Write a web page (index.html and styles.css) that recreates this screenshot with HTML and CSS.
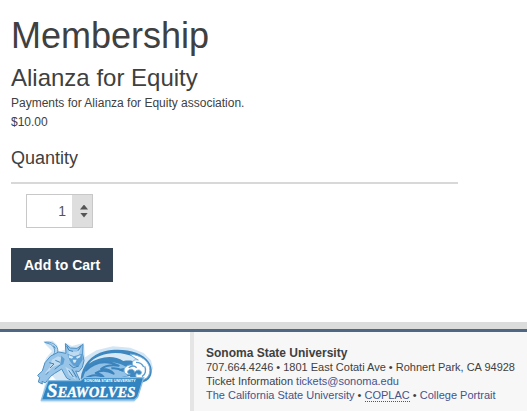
FILE: index.html
```
<!DOCTYPE html>
<html lang="en">
  <head>
    <meta charset="UTF-8" />
    <meta name="viewport" content="width=device-width, initial-scale=1.0" />
    <title>Membership - Sonoma State University</title>
    <link rel="stylesheet" href="styles.css">
  </head>
  <body>
    <main class="content">
      <h1>Membership</h1>
      <h2>Alianza for Equity</h2>
      <p>Payments for Alianza for Equity association.</p>
      <p>$10.00</p>
      <form class="cart-form">
        <h3><label for="quantity">Quantity</label></h3>
        <div class="quantity-row">
          <div class="spinner">
            <input type="text" inputmode="numeric" id="quantity" name="quantity" value="1" />
            <div class="spinner-buttons">
              <button type="button" class="up" aria-label="Increase quantity"></button>
              <button type="button" class="down" aria-label="Decrease quantity"></button>
            </div>
          </div>
        </div>
        <button type="submit" class="add-to-cart">Add to Cart</button>
      </form>
    </main>

    <footer class="footer">
      <div class="footer-logo">
        <svg class="logo" viewBox="0 0 390 210" role="img" aria-label="Seawolves">
          <!-- pale outline -->
          <path d="M40 18l28-1 14 14 4 18 18-4 2-22 20 10 36-10 3 44 34-21 50-12 52 4 40 16 22 22 6 24-12 24-18 12-16 54-12 12H32l12-54 40-6-20-22-20 14-18-6 12-26 10-32 18-22-18-18z" fill="#d3e6f5" />
          <!-- wave -->
          <path d="M152 132c4-42 32-73 72-83 52-12 111 1 132 31 14 20 12 46-6 57-20 12-48 4-50-14l-70 12z" fill="#3f87bf" />
          <path d="M176 86c30-34 94-42 138-18 16 8 26 17 32 29-20-18-42-23-66-19-26-18-68-17-104 8z" fill="#d9eaf7" />
          <path d="M160 126c6-26 30-44 62-45 28-1 54 4 73 19-16-2-24 0-28 6 12 2 20 7 26 17l-40 7z" fill="#91c1e7" />
          <path d="M166 108c26-27 62-34 100-16-26-3-42 1-53 10 16-1 30 4 38 14-20-11-38-12-54-2 10 1 19 5 24 12-22-9-44-5-60 8M244 100c14-2 25 1 35 8" fill="none" stroke="#3b83bd" stroke-width="6" stroke-linejoin="round" />
          <path d="M300 57c34 4 54 20 59 41 4 23-10 38-28 36-11-1-17-11-11-19 8 8 19 1 12-7-5-5-13-3-18 4-2-9-10-12-18-7-6 5-3 12 5 12-13 5-23-6-17-17 5-8 14-12 24-9-4-12 4-19 17-16-9-5-17-9-25-18z" fill="#fff" stroke="#76b1dc" stroke-width="3" />
          <path d="M318 82c10 0 19 5 23 14M344 94c6 12 2 25-8 31M296 98c8-6 18-6 24 0" fill="none" stroke="#5b9dcf" stroke-width="4" />
          <!-- wolf -->
          <path d="M62 66c16-8 16-28 0-38L44 22c20-3 36 6 39 21 2 12-2 18-8 24" fill="#b5d6ee" stroke="#5e9bcb" stroke-width="3" />
          <path d="M62 63l24-12 22 4-2-29 15 13 20 1 18-12-1 29 4 20-5 20-10 13-10-2 14 31-9 7-32-17-15-27-21 13-12 9-16 20-10-5 1 8-12-6 4-13-6-7 14-13 8-25z" fill="#98c4e8" stroke="#4c8fc3" stroke-width="3" stroke-linejoin="round" />
          <path d="M66 74l18-10 14 6-8 18-24 9-15 20-6-2 14-18zM116 43l10 7 14 0 12-8-6 18 6 15-6 15-10 5-8-16-12-4zM106 95l16 9 17 31-22-15z" fill="#bedbf1" />
          <path d="M112 56l20 8 24-8 2 18-12 20-16-2-12-16zM94 62l10 10-4 16-10 4z" fill="#5d9fd2" />
          <path d="M116 60l14 6-4 5-9-3zM152 60l-14 6 3 5 9-4zM128 74h12l-4 9h-5z" fill="#d9eaf7" />
          <!-- fur and face -->
          <path d="M110 33l7 13 12 3M153 33l-9 14M118 88l12 10 16-5M58 83l14 4-12 12M76 76l14 6M48 119l8-9M74 103l16-13M116 106l14 20M126 103l14 24M70 32l6 8" fill="none" stroke="#3d82b8" stroke-width="3" />
          <!-- banner -->
          <path d="M54 137h97l10-9h180l-18 58-10 9H34z" fill="#3184bf" stroke="#8dbfe3" stroke-width="4" />
          <text class="logo-university" x="162" y="141">SONOMA STATE UNIVERSITY</text>
          <text class="logo-name" x="50" y="186"><tspan class="logo-initial">S</tspan>EAWOLVES</text>
        </svg>
      </div>
      <div class="footer-info">
        <strong>Sonoma State University</strong>
        <p>707.664.4246 • 1801 East Cotati Ave • Rohnert Park, CA 94928</p>
        <p>Ticket Information <a href="mailto:tickets@sonoma.edu">tickets@sonoma.edu</a></p>
        <p>
          <a href="#">The California State University</a> •
          <a href="#"><abbr>COPLAC</abbr></a> •
          <a href="#">College Portrait</a>
        </p>
      </div>
    </footer>
  </body>
</html>
```

FILE: styles.css
```
* {
  box-sizing: border-box;
}
body {
  display: flex;
  flex-direction: column;
  min-height: 100vh;
  margin: 0;
  background: #fff;
  font-family: "Liberation Sans", Arial, sans-serif;
  font-size: 12px;
  color: #404040;
}
h1,
h2,
h3,
p {
  margin: 0;
  font-weight: normal;
}
.content {
  padding: 16px 11px 47px;
}
h1 {
  font-size: 36px;
  line-height: 40px;
  margin-bottom: 8px;
}
h2 {
  font-size: 24px;
  line-height: 28px;
  margin-bottom: 2px;
}
h3 {
  font-size: 18px;
  line-height: 20px;
}
.content p {
  line-height: 19px;
}
.cart-form {
  max-width: 447px;
  margin-top: 16px;
}
.quantity-row {
  margin-top: 14px;
  padding: 10px 15px 20px;
  border-top: 2px solid #d8d8d8;
}
.spinner {
  display: flex;
  width: 67px;
  height: 34px;
  border: 1px solid #c8c8c8;
}
.spinner input {
  flex: 1;
  min-width: 0;
  padding: 0 6px;
  border: 0;
  background: #fff;
  color: #555;
  font: 14px "Liberation Sans", Arial, sans-serif;
  text-align: right;
}
.spinner-buttons {
  display: flex;
  flex-direction: column;
  justify-content: center;
  gap: 3px;
  width: 20px;
  padding-left: 4px;
  background: #dedede;
}
.spinner-buttons button {
  width: 8px;
  height: 5px;
  margin: 0 auto;
  padding: 0;
  border: 0;
  background: #555;
  cursor: pointer;
}
.up {
  clip-path: polygon(50% 0, 100% 100%, 0 100%);
}
.down {
  clip-path: polygon(0 0, 100% 0, 50% 100%);
}
.add-to-cart {
  display: block;
  height: 34px;
  padding: 0 13px;
  border: 0;
  background: #344454;
  color: #fff;
  font: bold 14px "Liberation Sans", Arial, sans-serif;
  cursor: pointer;
}
.footer {
  display: flex;
  flex: 1;
  border-top: 3px solid #4e6785;
  box-shadow: 0 -7px #dcdcdc;
  font-size: 11px;
  line-height: 14px;
}
.footer-logo {
  flex: 0 0 193px;
  padding: 3px 30px 0;
  border-right: 4px solid #e5e5e5;
}
.logo {
  display: block;
  width: 130px;
  height: 70px;
}
.logo-university {
  fill: #fff;
  font: bold 11px "Liberation Sans", Arial, sans-serif;
}
.logo-name {
  fill: #fff;
  stroke: #fff;
  stroke-width: 1;
  font: italic bold 44px "Liberation Serif", "Times New Roman", serif;
}
.logo-initial {
  font-size: 58px;
}
.footer-info {
  flex: 1;
  padding: 14px 12px 6px;
  background: #f7f7f7;
}
.footer-info strong {
  display: block;
  font-size: 12px;
}
.footer a {
  color: #43548c;
  text-decoration: none;
}
.footer abbr {
  border-bottom: 1px dotted #43548c;
}
```
